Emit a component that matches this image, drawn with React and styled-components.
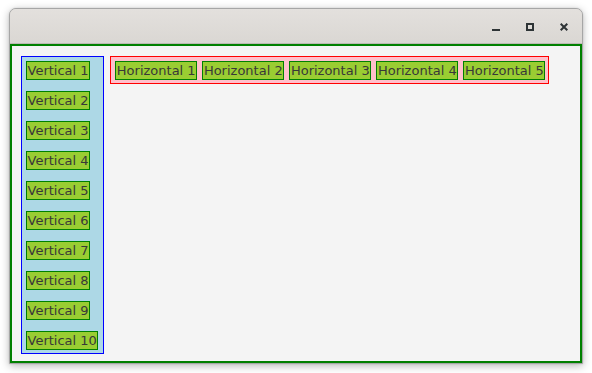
import React from "react";
import styled, { createGlobalStyle } from "styled-components";

const Global = createGlobalStyle`
  html, body { margin: 0; padding: 0; background: #ffffff; }
  body { font-family: "DejaVu Sans", "Liberation Sans", sans-serif; }
  * { box-sizing: border-box; }
`;

const Page = styled.div`
  width: 592px;
  height: 373px;
  padding: 8px 0 0 9px;
  overflow: hidden;
`;

const Window = styled.div`
  width: 574px;
  height: 356px;
  border: 1px solid #a6a6a6;
  border-radius: 7px 7px 0 0;
  display: flex;
  flex-direction: column;
  background: #dedbd8;
  box-shadow: 0 2px 9px rgba(0, 0, 0, 0.28), 0 0 2px rgba(0, 0, 0, 0.12);
`;

const TitleBar = styled.div`
  height: 35px;
  flex: none;
  border-bottom: 1px solid #bdb9b5;
  border-radius: 6px 6px 0 0;
  background: linear-gradient(#e3e0dd, #dad7d3);
  display: flex;
  align-items: center;
  justify-content: flex-end;
  gap: 26px;
  padding-right: 14px;
`;

const Ctl = styled.svg`
  width: 8px;
  height: 8px;
  display: block;
  margin-top: 1px;
`;

const Content = styled.div`
  flex: 1;
  border: 2px solid #008000;
  background: #f4f4f4;
  display: flex;
  align-items: flex-start;
  gap: 6px;
  padding: 10px 0 0 9px;
`;

const Box = styled.div`
  display: flex;
  flex-direction: ${(p) => (p.$vertical ? "column" : "row")};
  align-items: flex-start;
  gap: ${(p) => (p.$vertical ? "11px" : "5.25px")};
  padding: ${(p) => (p.$vertical ? "4px 5px 3px 4px" : "4px 3px 3px 4px")};
  border: 1px solid ${(p) => p.$border};
  background: ${(p) => p.$bg};
`;

const Label = styled.div`
  background: #9acd32;
  border: 1px solid #008000;
  color: #383838;
  font-size: 13px;
  line-height: 17px;
  height: 19px;
  padding: 0 0.5px;
  white-space: nowrap;
`;

const vertical = Array.from({ length: 10 }, (_, i) => `Vertical ${i + 1}`);
const horizontal = Array.from({ length: 5 }, (_, i) => `Horizontal ${i + 1}`);

export default function App() {
  return (
    <>
      <Global />
      <Page>
        <Window>
          <TitleBar>
            <Ctl viewBox="0 0 8 8">
              <rect x="0" y="6" width="8" height="2" fill="#2e3436" />
            </Ctl>
            <Ctl viewBox="0 0 8 8">
              <rect x="1" y="1" width="6" height="6" fill="none" stroke="#2e3436" strokeWidth="2" />
            </Ctl>
            <Ctl viewBox="0 0 8 8">
              <path d="M0.7 0.7 L7.3 7.3 M7.3 0.7 L0.7 7.3" stroke="#2e3436" strokeWidth="2" />
            </Ctl>
          </TitleBar>
          <Content>
            <Box $vertical $border="#0000ff" $bg="#add8e6">
              {vertical.map((t) => (
                <Label key={t}>{t}</Label>
              ))}
            </Box>
            <Box $border="#ff0000" $bg="#ffc0cb">
              {horizontal.map((t) => (
                <Label key={t}>{t}</Label>
              ))}
            </Box>
          </Content>
        </Window>
      </Page>
    </>
  );
}
